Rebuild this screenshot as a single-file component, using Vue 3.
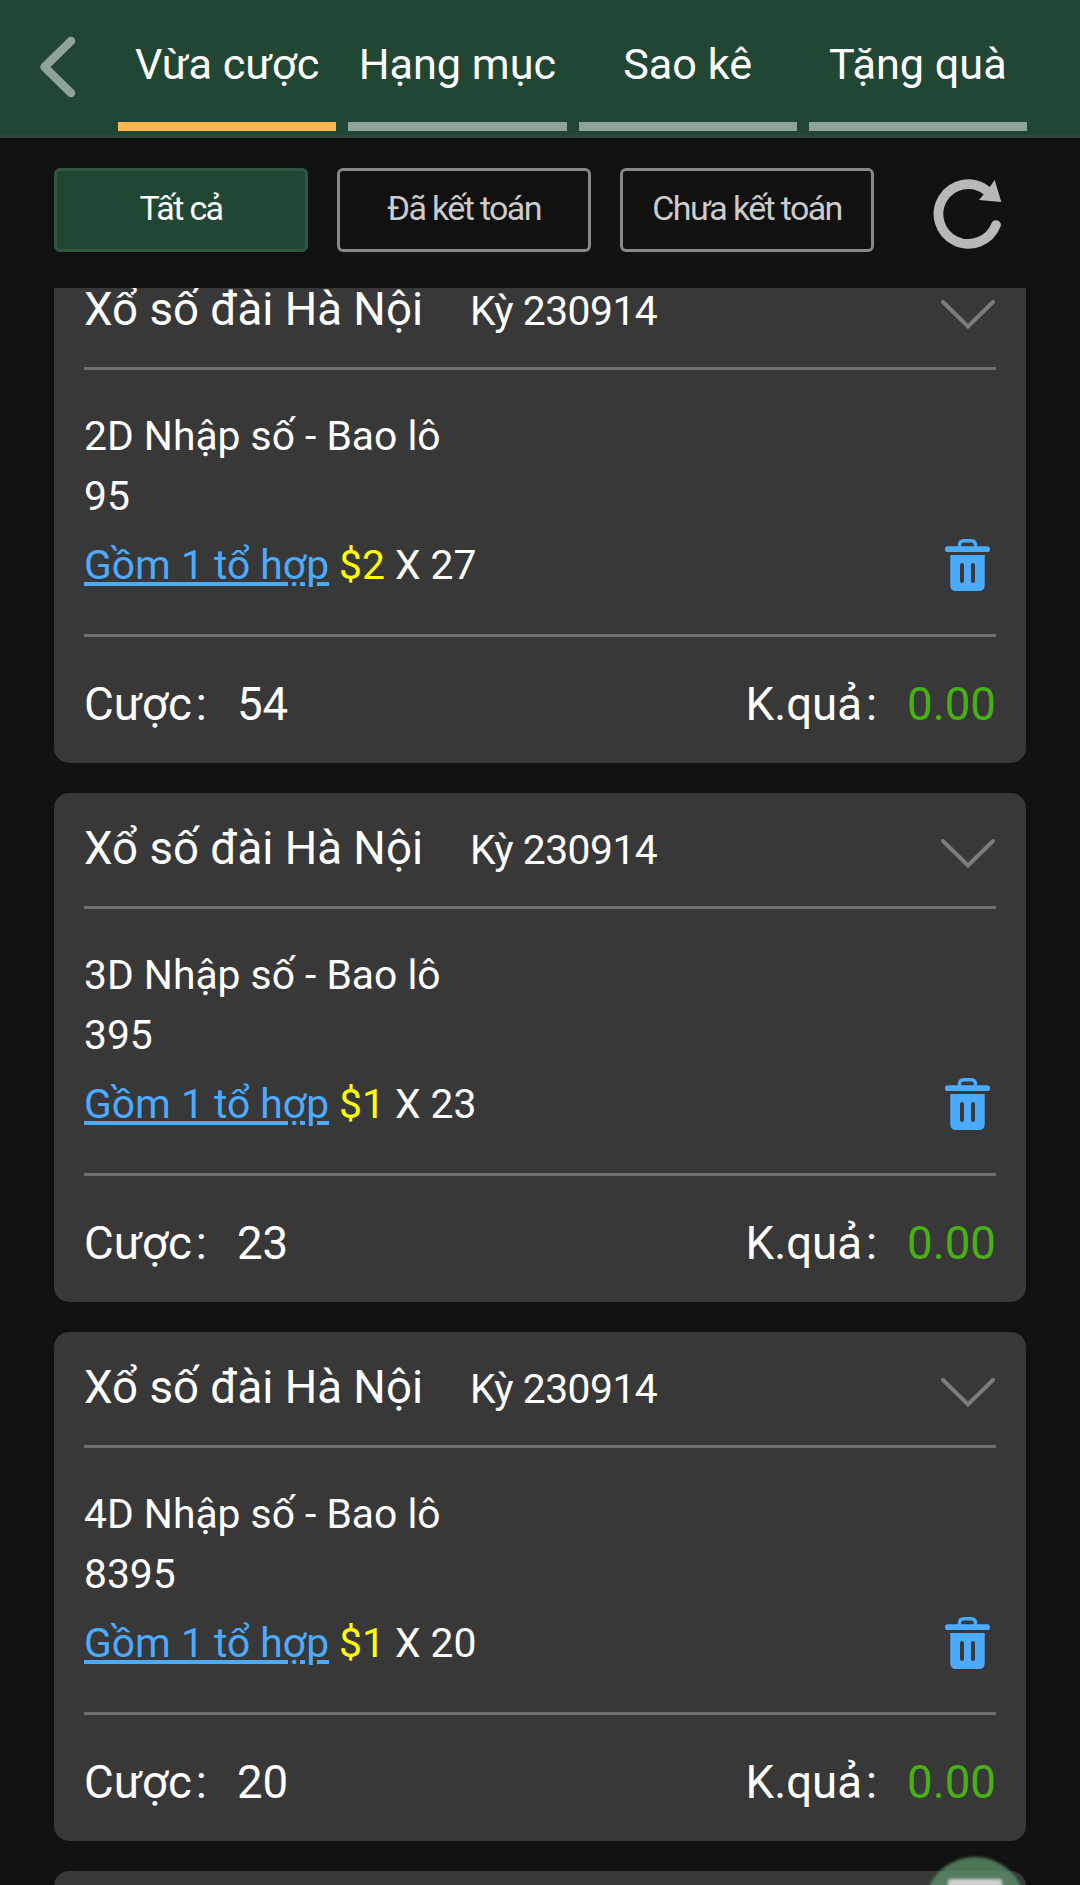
<template>
  <div class="page">
    <header class="header">
      <button class="back" type="button">
        <svg width="36" height="62" viewBox="0 0 36 62">
          <path d="M31 5 L4.5 31 L31 57" fill="none" stroke="#90a398" stroke-width="8.5" stroke-linecap="round" stroke-linejoin="round" />
        </svg>
      </button>
      <nav class="tabs">
        <div
          v-for="(tab, i) in tabs"
          :key="tab"
          class="tab"
          :class="{ active: i === currentTab }"
          @click="currentTab = i"
        >{{ tab }}</div>
      </nav>
    </header>

    <div class="filters">
      <button
        v-for="(item, i) in filters"
        :key="item"
        type="button"
        class="filter"
        :class="{ active: i === currentFilter }"
        @click="currentFilter = i"
      >{{ item }}</button>
      <svg class="refresh" width="70" height="72" viewBox="0 0 70 72">
        <path d="M63 46 A29.8 29.8 0 1 1 53 11.1" fill="none" stroke="#b8b8b8" stroke-width="9.7" stroke-linecap="round" />
        <path d="M61.7 1 L68.3 23 L46 21 L56 9 Z" fill="#b8b8b8" />
      </svg>
    </div>

    <main class="list">
      <section v-for="bet in bets" :key="bet.id" class="card">
        <div class="card-head">
          <span class="title">Xổ số đài Hà Nội</span>
          <span class="period">Kỳ 230914</span>
          <svg class="arrow" width="54" height="30" viewBox="0 0 54 30">
            <path d="M2 2 L27 26.5 L52 2" fill="none" stroke="#7c7c7c" stroke-width="4" stroke-linecap="round" />
          </svg>
        </div>
        <div class="card-body">
          <div class="line kind">{{ bet.kind }} Nhập số - Bao lô</div>
          <div class="line number">{{ bet.number }}</div>
          <div class="line combo">
            <a class="link">Gồm 1 tổ hợp</a>
            <span class="price">${{ bet.price }}</span>
            <span class="times">X {{ bet.times }}</span>
            <svg class="trash" width="45" height="52" viewBox="0 0 45 52">
              <path d="M14.5 9 V6 Q14.5 1.7 19 1.7 H26 Q30.5 1.7 30.5 6 V9" fill="none" stroke="#4dabff" stroke-width="3.4" />
              <rect x="0" y="7.3" width="45" height="5.7" rx="2.8" fill="#4dabff" />
              <path d="M5.3 16 H39.7 V46 Q39.7 52 33.7 52 H11.3 Q5.3 52 5.3 46 Z" fill="#4dabff" />
              <path d="M17 26 V42 M28 26 V42" stroke="#383838" stroke-width="4" stroke-linecap="round" />
            </svg>
          </div>
        </div>
        <div class="card-foot">
          <span>Cược</span><span class="colon">:</span>
          <span class="amount">{{ bet.price * bet.times }}</span>
          <span class="result">K.quả</span><span class="colon">:</span>
          <span class="win">0.00</span>
        </div>
      </section>
    </main>

    <div class="float-btn"><i></i></div>
  </div>
</template>

<script setup>
import { ref } from 'vue'

const tabs = ['Vừa cược', 'Hạng mục', 'Sao kê', 'Tặng quà']
const filters = ['Tất cả', 'Đã kết toán', 'Chưa kết toán']
const currentTab = ref(0)
const currentFilter = ref(0)

const bets = ref([
  { id: 1, kind: '2D', number: '95', price: 2, times: 27 },
  { id: 2, kind: '3D', number: '395', price: 1, times: 23 },
  { id: 3, kind: '4D', number: '8395', price: 1, times: 20 },
  { id: 4, kind: '2D', number: '83', price: 1, times: 27 }
])
</script>

<style>
body {
  margin: 0;
  background: #111;
}
</style>

<style scoped>
.page {
  position: relative;
  display: flex;
  flex-direction: column;
  width: 1080px;
  height: 1885px;
  overflow: hidden;
  background: #111;
  color: #fff;
  font-family: Roboto, "Noto Sans", sans-serif;
}
button {
  margin: 0;
  padding: 0;
  border: none;
  background: none;
  font-family: inherit;
  cursor: pointer;
}

/* header */
.header {
  display: flex;
  flex: none;
  height: 135px;
  background: #214734;
  border-bottom: 3px solid #38433d;
}
.back {
  display: flex;
  width: 118px;
  padding: 36px 0 0 40px;
}
.tabs {
  display: grid;
  grid-template-columns: repeat(4, 1fr);
  gap: 12px;
  width: 909px;
}
.tab {
  height: 122px;
  border-bottom: 9px solid #90a398;
  line-height: 129px;
  font-size: 43.2px;
  text-align: center;
  white-space: nowrap;
}
.tab.active {
  border-color: #ffb74d;
}

/* filters */
.filters {
  display: flex;
  flex: none;
  gap: 29px;
  height: 120px;
  padding: 30px 0 0 54px;
}
.filter {
  box-sizing: border-box;
  width: 254px;
  height: 84px;
  padding-bottom: 5px;
  border: 3px solid #888;
  border-radius: 6px;
  color: #ccc;
  font-size: 34px;
  letter-spacing: -1.65px;
}
.filter.active {
  background: #214734;
  border-color: #2d5641;
  color: #fff;
}
.refresh {
  margin: 11px 0 0 30px;
}

/* list */
.list {
  flex: 1;
  min-height: 0;
  padding: 0 54px;
  overflow: hidden;
}
.card {
  height: 509px;
  margin-bottom: 30px;
  padding: 0 30px;
  box-sizing: border-box;
  background: #383838;
  border-radius: 15px;
}
.card:first-child {
  margin-top: -34px;
}
.card-head {
  display: flex;
  align-items: baseline;
  height: 113px;
  border-bottom: 3px solid #707070;
  line-height: 111px;
}
.title {
  font-size: 45.6px;
}
.period {
  margin-left: 47px;
  font-size: 40.8px;
  letter-spacing: -0.5px;
}
.arrow {
  align-self: flex-start;
  margin: 46px 1px 0 auto;
}
.card-body {
  height: 228px;
  padding-top: 36px;
  border-bottom: 3px solid #707070;
  font-size: 40.8px;
}
.line {
  height: 60px;
  line-height: 60px;
}
.combo {
  display: flex;
  margin-top: 9px;
}
.link {
  color: #4dabff;
  text-decoration: underline;
  text-decoration-thickness: 4px;
  text-underline-offset: 3px;
}
.price {
  margin-left: 10px;
  color: #ffff00;
}
.times {
  margin-left: 10px;
}
.trash {
  margin: 4px 6px 0 auto;
}
.card-foot {
  display: flex;
  padding-top: 38px;
  line-height: 60px;
  font-size: 45.6px;
}
.colon {
  margin-left: 4px;
}
.amount {
  margin-left: 30px;
}
.result {
  margin-left: auto;
}
.win {
  margin-left: 30px;
  color: #47b012;
}

/* floating button */
.float-btn {
  position: absolute;
  left: 924px;
  top: 1857px;
  width: 102px;
  height: 102px;
  border-radius: 50%;
  background: rgba(92, 144, 108, 0.8);
  filter: blur(1.5px);
}
.float-btn i {
  display: block;
  width: 54px;
  height: 40px;
  margin: 22px auto 0;
  border-radius: 3px;
  background: #d0d0d0;
}
</style>
